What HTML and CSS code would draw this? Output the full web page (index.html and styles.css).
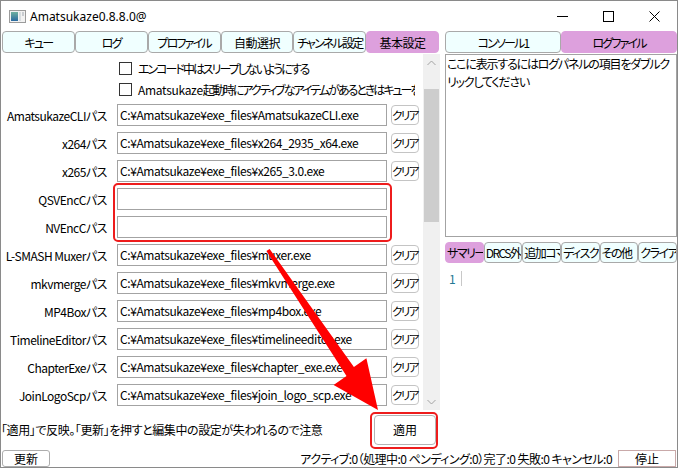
FILE: index.html
```html
<!DOCTYPE html>
<html lang="ja">
<head>
<meta charset="utf-8">
<title>Amatsukaze</title>
<link rel="stylesheet" href="styles.css">
</head>
<body>
<div class="window">
  <div class="titlebar">
    <svg class="app-icon" width="17" height="13" viewBox="0 0 17 13">
      <defs>
        <linearGradient id="g1" x1="0" y1="0" x2="0" y2="1">
          <stop offset="0" stop-color="#6fb0a0"/>
          <stop offset="1" stop-color="#2a6aa0"/>
        </linearGradient>
      </defs>
      <rect x="0.5" y="0.5" width="16" height="12" fill="#f2f2f2" stroke="#9b9b9b"/>
      <rect x="2" y="2" width="7" height="9" fill="url(#g1)"/>
      <rect x="10" y="2" width="2" height="9" fill="#d8dde0"/>
      <rect x="13" y="2" width="2" height="4" fill="#c8ccd0"/>
    </svg>
    <span class="title">Amatsukaze0.8.8.0@</span>
    <div class="controls">
      <div class="ctrl"><svg width="11" height="11" viewBox="0 0 11 11"><line x1="0" y1="5.5" x2="11" y2="5.5" stroke="#000" stroke-width="1"/></svg></div>
      <div class="ctrl"><svg width="11" height="11" viewBox="0 0 11 11"><rect x="0.5" y="0.5" width="10" height="10" fill="none" stroke="#000" stroke-width="1"/></svg></div>
      <div class="ctrl"><svg width="11" height="11" viewBox="0 0 11 11"><path d="M0.5 0.5 L10.5 10.5 M10.5 0.5 L0.5 10.5" stroke="#000" stroke-width="1"/></svg></div>
    </div>
  </div>

  <div class="main">
    <div class="left">
      <div class="tabs">
        <div class="tab">キュー</div>
        <div class="tab">ログ</div>
        <div class="tab">プロファイル</div>
        <div class="tab k">自動選択</div>
        <div class="tab">チャンネル設定</div>
        <div class="tab k active">基本設定</div>
      </div>
      <div class="settings">
        <div class="scroll">
          <div class="checks">
            <label class="check"><span class="box"></span><span class="cb-text">エンコード中はスリープしないようにする</span></label>
            <label class="check"><span class="box"></span><span class="cb-text"><span class="latin">Amatsukaze</span>起動時にアクティブなアイテムがあるときはキューを開始する</span></label>
          </div>
          <div class="form">
            <div class="lbl">AmatsukazeCLIパス</div><div class="field">C:¥Amatsukaze¥exe_files¥AmatsukazeCLI.exe</div><div class="btn-clear">クリア</div>
            <div class="lbl">x264パス</div><div class="field">C:¥Amatsukaze¥exe_files¥x264_2935_x64.exe</div><div class="btn-clear">クリア</div>
            <div class="lbl">x265パス</div><div class="field">C:¥Amatsukaze¥exe_files¥x265_3.0.exe</div><div class="btn-clear">クリア</div>
            <div class="lbl">QSVEncCパス</div><div class="field"></div><div></div>
            <div class="lbl">NVEncCパス</div><div class="field"></div><div></div>
            <div class="lbl">L-SMASH Muxerパス</div><div class="field">C:¥Amatsukaze¥exe_files¥muxer.exe</div><div class="btn-clear">クリア</div>
            <div class="lbl">mkvmergeパス</div><div class="field">C:¥Amatsukaze¥exe_files¥mkvmerge.exe</div><div class="btn-clear">クリア</div>
            <div class="lbl">MP4Boxパス</div><div class="field">C:¥Amatsukaze¥exe_files¥mp4box.exe</div><div class="btn-clear">クリア</div>
            <div class="lbl">TimelineEditorパス</div><div class="field">C:¥Amatsukaze¥exe_files¥timelineeditor.exe</div><div class="btn-clear">クリア</div>
            <div class="lbl">ChapterExeパス</div><div class="field">C:¥Amatsukaze¥exe_files¥chapter_exe.exe</div><div class="btn-clear">クリア</div>
            <div class="lbl">JoinLogoScpパス</div><div class="field">C:¥Amatsukaze¥exe_files¥join_logo_scp.exe</div><div class="btn-clear">クリア</div>
          </div>
        </div>
        <div class="scrollbar">
          <div class="sb-btn"><svg width="9" height="6" viewBox="0 0 9 6"><path d="M0.5 5 L4.5 1 L8.5 5" fill="none" stroke="#a3a3a3" stroke-width="1"/></svg></div>
          <div class="sb-track"><div class="sb-thumb"></div></div>
          <div class="sb-btn"><svg width="9" height="6" viewBox="0 0 9 6"><path d="M0.5 1 L4.5 5 L8.5 1" fill="none" stroke="#a3a3a3" stroke-width="1"/></svg></div>
        </div>
      </div>
      <div class="applyrow">
        <span class="note">「適用」で反映。「更新」を押すと編集中の設定が失われるので注意</span>
        <div class="btn-apply">適用</div>
      </div>
    </div>

    <div class="right">
      <div class="rtabs">
        <div class="tab">コンソール1</div>
        <div class="tab active">ログファイル</div>
      </div>
      <div class="logbox">ここに表示するにはログパネルの項目をダブルク<br>リックしてください</div>
      <div class="subtabs">
        <div class="stab active">サマリー</div>
        <div class="stab">DRCS外字</div>
        <div class="stab">追加コマンド</div>
        <div class="stab">ディスク</div>
        <div class="stab">その他</div>
        <div class="stab">クライアント</div>
      </div>
      <div class="summary">
        <span class="lineno">1</span><span class="gutter"></span>
      </div>
    </div>
  </div>

  <div class="statusbar">
    <div class="btn-small">更新</div>
    <span class="status">アクティブ:0（処理中:0 ペンディング:0）完了:0 失敗:0 キャンセル:0</span>
    <div class="btn-stop">停止</div>
  </div>

  <div class="mark mark-fields"></div>
  <div class="mark mark-apply"></div>
  <svg class="arrow" width="676" height="466" viewBox="1 1 676 466">
    <polygon points="269.6,248.9 353.9,366.9 366.4,358.2 378,410 333.6,385.1 346.5,376.0 266.4,251.1" fill="#ff0000"/>
  </svg>
</div>
</body>
</html>
```

FILE: styles.css
```css
* { box-sizing: border-box; }

body {
  margin: 0;
  background: #ffffff;
  color: #000000;
  font-family: "Noto Sans CJK JP", "Noto Sans", sans-serif;
  font-size: 12px;
  font-feature-settings: "palt";
}

.window {
  position: relative;
  width: 678px;
  height: 468px;
  border: 1px solid #8a8a8a;
  display: flex;
  flex-direction: column;
  overflow: hidden;
  background: #ffffff;
}

/* title bar */
.titlebar {
  flex: none;
  height: 30px;
  display: flex;
  align-items: center;
}
.app-icon { margin-left: 8px; flex: none; }
.title {
  margin-left: 4px;
  font-family: "Noto Sans", sans-serif;
  font-size: 12px;
  font-feature-settings: normal;
}
.controls { margin-left: auto; display: flex; }
.ctrl {
  width: 46px;
  height: 30px;
  display: flex;
  align-items: center;
  justify-content: center;
}

/* main */
.main {
  flex: none;
  height: 418px;
  display: flex;
}
.left {
  width: 439px;
  display: flex;
  flex-direction: column;
}

.tabs {
  margin-left: 1px;
  width: 437px;
  height: 22px;
  display: grid;
  grid-template-columns: repeat(6, 1fr);
  flex: none;
}
.tab, .stab {
  border: 1px solid #a9a9a9;
  border-radius: 4px;
  background: #f0ffff;
  display: flex;
  align-items: center;
  justify-content: safe center;
  white-space: nowrap;
  overflow: hidden;
  padding: 0 2px;
  letter-spacing: -1.8px;
}
.tab.k { letter-spacing: -0.5px; }
.tab.active, .stab.active {
  background: #dda0dd;
  border-color: #dda0dd;
}

.settings {
  flex: none;
  height: 357px;
  display: flex;
}
.scroll {
  flex: 1;
  overflow: hidden;
  padding-top: 5px;
}
.checks {
  margin-left: 117px;
  width: 297px;
  overflow: hidden;
}
.check {
  height: 21px;
  display: flex;
  align-items: center;
  white-space: nowrap;
}
.cb-text { letter-spacing: -2px; }
.cb-text .latin { letter-spacing: -0.3px; }
.box {
  flex: none;
  width: 13px;
  height: 13px;
  border: 1px solid #333333;
  background: #ffffff;
  margin-left: 1px;
  margin-right: 6px;
}

.form {
  margin-top: 1px;
  display: grid;
  grid-template-columns: 106px 280px 32px;
  grid-auto-rows: 28px;
  align-items: center;
}
.lbl {
  text-align: right;
  white-space: nowrap;
  letter-spacing: -0.5px;
  overflow: visible;
}
.field {
  margin-left: 10px;
  width: 270px;
  height: 22px;
  border: 1px solid #a3a3a3;
  padding: 0 2px;
  line-height: 20px;
  white-space: nowrap;
  overflow: hidden;
  letter-spacing: -0.4px;
}
.btn-clear {
  margin-left: 4px;
  width: 28px;
  height: 20px;
  border: 1px solid #c4c4c4;
  border-radius: 4px;
  background: #ffffff;
  display: flex;
  align-items: center;
  justify-content: center;
  white-space: nowrap;
  padding: 0;
  font-size: 11.5px;
  letter-spacing: -1.5px;
}

.scrollbar {
  width: 17px;
  flex: none;
  margin-top: 1px;
  background: #f0f0f0;
  display: flex;
  flex-direction: column;
}
.sb-btn {
  height: 17px;
  display: flex;
  align-items: center;
  justify-content: center;
  flex: none;
}
.sb-track { flex: 1; padding-top: 18px; }
.sb-thumb {
  height: 133px;
  background: #cdcdcd;
  margin: 0 1px;
}

.applyrow {
  flex: 1;
  display: flex;
  align-items: center;
}
.note { white-space: nowrap; letter-spacing: -0.4px; }
.btn-apply {
  margin-left: auto;
  margin-right: 4px;
  width: 62px;
  height: 30px;
  border: 1px solid #b4b4b4;
  border-radius: 4px;
  background: #ffffff;
  display: flex;
  align-items: center;
  justify-content: center;
}

/* right panel */
.right {
  margin-left: 5px;
  width: 232px;
  display: flex;
  flex-direction: column;
}
.rtabs {
  height: 22px;
  display: grid;
  grid-template-columns: 1fr 1fr;
  flex: none;
}
.logbox {
  margin-top: 1px;
  height: 183px;
  border: 1px solid #a3a3a3;
  padding: 0 1px;
  line-height: 18px;
  letter-spacing: -1.2px;
  white-space: nowrap;
  overflow: hidden;
  flex: none;
}
.subtabs {
  margin-top: 5px;
  height: 21px;
  display: grid;
  grid-template-columns: repeat(6, 1fr);
  flex: none;
}
.stab { padding: 0 1px; justify-content: flex-start; letter-spacing: -1.5px; }
.summary {
  margin-top: 7px;
  display: flex;
  align-items: center;
  height: 16px;
}
.lineno {
  width: 16px;
  padding-left: 4px;
  color: #237893;
}
.gutter {
  width: 1px;
  height: 15px;
  background: #c8c8c8;
}

/* status bar */
.statusbar {
  flex: 1;
  display: flex;
  align-items: flex-start;
}
.btn-small {
  margin-left: 1px;
  margin-top: 1px;
  width: 48px;
  height: 17px;
  border: 1px solid #adadad;
  border-radius: 3px;
  display: flex;
  align-items: center;
  justify-content: center;
  background: #ffffff;
}
.status {
  margin-left: auto;
  margin-top: 1px;
  line-height: 17px;
  white-space: nowrap;
  letter-spacing: -0.55px;
}
.btn-stop {
  margin-left: 6px;
  margin-right: 1px;
  margin-top: 1px;
  width: 58px;
  height: 17px;
  border: 1px solid #c9a9a9;
  display: flex;
  align-items: center;
  justify-content: center;
  background: #ffffff;
}

/* annotation overlays */
.mark {
  position: absolute;
  border: 2px solid #ee1c1c;
  border-radius: 5px;
}
.mark-fields { left: 112px; top: 182px; width: 279px; height: 59px; }
.mark-apply { left: 369px; top: 411px; width: 68px; height: 37px; }
.arrow { position: absolute; left: 0; top: 0; }
```
